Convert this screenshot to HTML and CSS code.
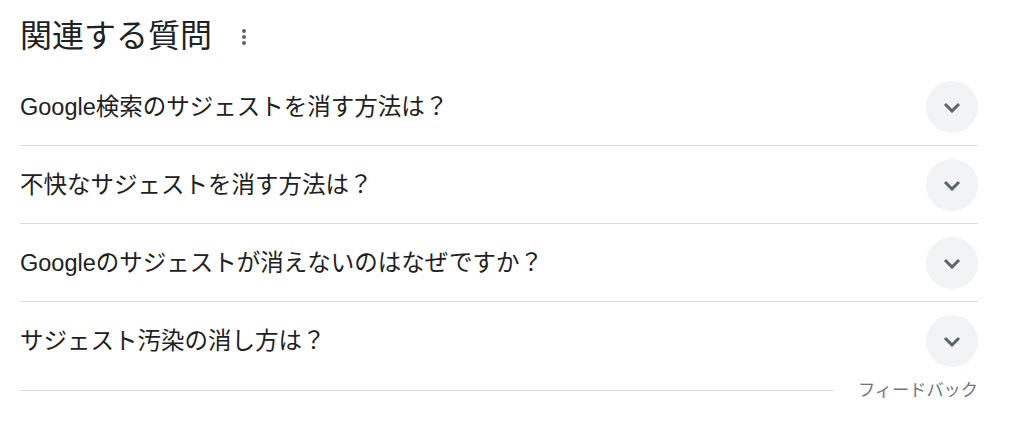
FILE: index.html
```html
<!DOCTYPE html>
<html lang="ja">
<head>
<meta charset="utf-8">
<link rel="stylesheet" href="styles.css">
</head>
<body>
<div class="paa">
  <div class="header">
    <h2 class="title">関連する質問</h2>
    <svg class="more" width="6" height="18" viewBox="0 0 6 18"><circle cx="3" cy="3" r="2"/><circle cx="3" cy="9" r="2"/><circle cx="3" cy="15" r="2"/></svg>
  </div>
  <div class="list">
    <div class="row">
      <span class="q">Google検索のサジェストを消す方法は？</span>
      <span class="btn"><svg width="18" height="11" viewBox="0 0 18 11"><path d="M2 2l7 7 7-7"/></svg></span>
    </div>
    <div class="row">
      <span class="q">不快なサジェストを消す方法は？</span>
      <span class="btn"><svg width="18" height="11" viewBox="0 0 18 11"><path d="M2 2l7 7 7-7"/></svg></span>
    </div>
    <div class="row">
      <span class="q">Googleのサジェストが消えないのはなぜですか？</span>
      <span class="btn"><svg width="18" height="11" viewBox="0 0 18 11"><path d="M2 2l7 7 7-7"/></svg></span>
    </div>
    <div class="row last">
      <span class="q">サジェスト汚染の消し方は？</span>
      <span class="btn"><svg width="18" height="11" viewBox="0 0 18 11"><path d="M2 2l7 7 7-7"/></svg></span>
    </div>
  </div>
  <div class="feedback">
    <span class="fline"></span>
    <span class="ftext">フィードバック</span>
  </div>
</div>
</body>
</html>
```
FILE: styles.css
```css
html, body {
  margin: 0;
  padding: 0;
  background: #fff;
}
body {
  font-family: "Liberation Sans", Arial, "Noto Sans CJK JP", sans-serif;
  color: #202124;
}
.paa {
  width: 958px;
  padding-left: 20px;
}
.header {
  height: 68px;
  display: flex;
  align-items: center;
  gap: 29px;
}
.title {
  margin: 0;
  font-size: 32px;
  font-weight: 400;
  line-height: 40px;
  padding-top: 4px;
}
.more {
  fill: #5f6368;
  margin-top: 5px;
}
.row {
  height: 77px;
  border-bottom: 1px solid #dadce0;
  display: flex;
  align-items: center;
  justify-content: space-between;
}
.row.last {
  border-bottom: none;
  height: 78px;
}
.q {
  font-size: 23.5px;
  line-height: 32px;
}
.btn {
  width: 52px;
  height: 52px;
  border-radius: 50%;
  background: #f1f3f4;
  display: flex;
  align-items: center;
  justify-content: center;
}
.btn svg {
  fill: none;
  stroke: #5f6368;
  stroke-width: 3;
  margin-top: 1px;
}
.feedback {
  display: flex;
  align-items: center;
  height: 20px;
}
.fline {
  flex: 1;
  height: 1px;
  background: #dadce0;
}
.ftext {
  margin-left: 24px;
  font-size: 17.2px;
  line-height: 22px;
  color: #70757a;
}
```
